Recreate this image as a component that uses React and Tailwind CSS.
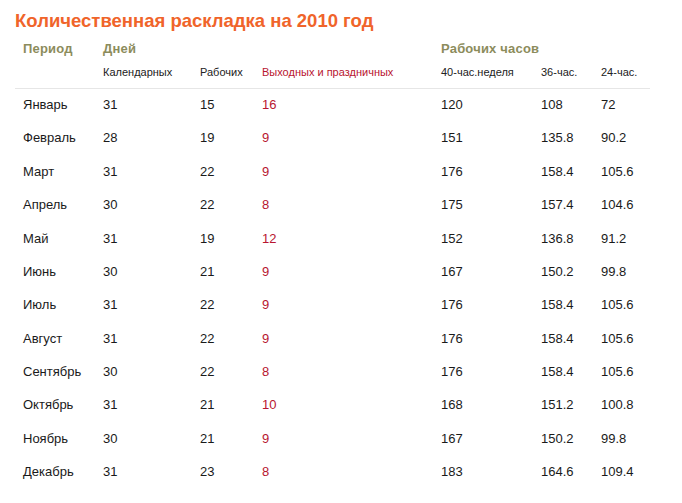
const rows = [
  ["Январь", "31", "15", "16", "120", "108", "72"],
  ["Февраль", "28", "19", "9", "151", "135.8", "90.2"],
  ["Март", "31", "22", "9", "176", "158.4", "105.6"],
  ["Апрель", "30", "22", "8", "175", "157.4", "104.6"],
  ["Май", "31", "19", "12", "152", "136.8", "91.2"],
  ["Июнь", "30", "21", "9", "167", "150.2", "99.8"],
  ["Июль", "31", "22", "9", "176", "158.4", "105.6"],
  ["Август", "31", "22", "9", "176", "158.4", "105.6"],
  ["Сентябрь", "30", "22", "8", "176", "158.4", "105.6"],
  ["Октябрь", "31", "21", "10", "168", "151.2", "100.8"],
  ["Ноябрь", "30", "21", "9", "167", "150.2", "99.8"],
  ["Декабрь", "31", "23", "8", "183", "164.6", "109.4"],
];

const cols = "grid grid-cols-[80px_97px_62px_179px_100px_60px_1fr] pl-2";

export default function App() {
  return (
    <div className="w-[682px] h-[503px] bg-white font-['Liberation_Sans',Arial,sans-serif] pl-[15px] pt-[10px]">
      <h1 className="text-[18.5px] leading-[22px] font-bold text-[#f0642a]">
        Количественная раскладка на 2010 год
      </h1>
      <div className="w-[635px] mt-[4px]">
        <div className={`${cols} h-[26px] items-center text-[13px] font-bold tracking-[0.2px] text-[#8c8c5c]`}>
          <div>Период</div>
          <div className="col-span-3">Дней</div>
          <div className="col-span-3">Рабочих часов</div>
        </div>
        <div className={`${cols} h-[27px] items-center text-[11px] text-[#222] border-b border-[#e6e6e6] pb-[6px]`}>
          <div />
          <div>Календарных</div>
          <div>Рабочих</div>
          <div className="text-[#b81530]">Выходных и праздничных</div>
          <div>40-час.неделя</div>
          <div>36-час.</div>
          <div>24-час.</div>
        </div>
        <div className="-mt-[1px]">
          {rows.map((r) => (
            <div key={r[0]} className={`${cols} h-[33.4px] items-center text-[13px] text-[#1a1a1a]`}>
              {r.map((c, i) => (
                <div key={i} className={i === 3 ? "text-[#b81530]" : ""}>
                  {c}
                </div>
              ))}
            </div>
          ))}
        </div>
      </div>
    </div>
  );
}
